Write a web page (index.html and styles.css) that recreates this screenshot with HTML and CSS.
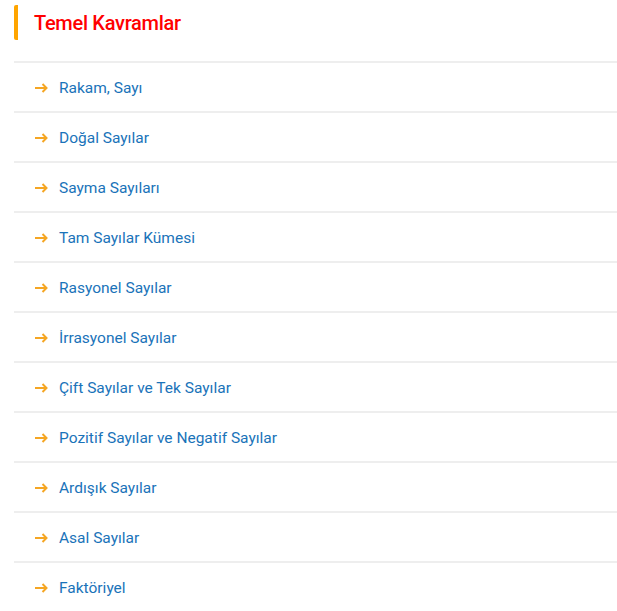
FILE: index.html
```html
<!DOCTYPE html>
<html lang="tr">
<head>
<meta charset="utf-8">
<link rel="stylesheet" href="styles.css">
</head>
<body>
<div class="wrap">
  <h2 class="title">Temel Kavramlar</h2>
  <ul class="list">
    <li class="item"><svg class="arrow" viewBox="0 0 13 10"><path d="M0 5H11.5M7.5 1L11.5 5L7.5 9"/></svg><a href="#">Rakam, Sayı</a></li>
    <li class="item"><svg class="arrow" viewBox="0 0 13 10"><path d="M0 5H11.5M7.5 1L11.5 5L7.5 9"/></svg><a href="#">Doğal Sayılar</a></li>
    <li class="item"><svg class="arrow" viewBox="0 0 13 10"><path d="M0 5H11.5M7.5 1L11.5 5L7.5 9"/></svg><a href="#">Sayma Sayıları</a></li>
    <li class="item"><svg class="arrow" viewBox="0 0 13 10"><path d="M0 5H11.5M7.5 1L11.5 5L7.5 9"/></svg><a href="#">Tam Sayılar Kümesi</a></li>
    <li class="item"><svg class="arrow" viewBox="0 0 13 10"><path d="M0 5H11.5M7.5 1L11.5 5L7.5 9"/></svg><a href="#">Rasyonel Sayılar</a></li>
    <li class="item"><svg class="arrow" viewBox="0 0 13 10"><path d="M0 5H11.5M7.5 1L11.5 5L7.5 9"/></svg><a href="#">İrrasyonel Sayılar</a></li>
    <li class="item"><svg class="arrow" viewBox="0 0 13 10"><path d="M0 5H11.5M7.5 1L11.5 5L7.5 9"/></svg><a href="#">Çift Sayılar ve Tek Sayılar</a></li>
    <li class="item"><svg class="arrow" viewBox="0 0 13 10"><path d="M0 5H11.5M7.5 1L11.5 5L7.5 9"/></svg><a href="#">Pozitif Sayılar ve Negatif Sayılar</a></li>
    <li class="item"><svg class="arrow" viewBox="0 0 13 10"><path d="M0 5H11.5M7.5 1L11.5 5L7.5 9"/></svg><a href="#">Ardışık Sayılar</a></li>
    <li class="item"><svg class="arrow" viewBox="0 0 13 10"><path d="M0 5H11.5M7.5 1L11.5 5L7.5 9"/></svg><a href="#">Asal Sayılar</a></li>
    <li class="item"><svg class="arrow" viewBox="0 0 13 10"><path d="M0 5H11.5M7.5 1L11.5 5L7.5 9"/></svg><a href="#">Faktöriyel</a></li>
  </ul>
</div>
</body>
</html>
```
FILE: styles.css
```css
html, body {
  margin: 0;
  padding: 0;
  background: #fff;
}
body {
  font-family: Roboto, "Noto Sans", sans-serif;
}
.wrap {
  padding: 5px 0 0 14px;
}
.title {
  margin: 0;
  box-sizing: border-box;
  height: 35px;
  padding-top: 1px;
  display: flex;
  align-items: center;
  border-left: 4px solid #ffa500;
  border-radius: 2px;
  padding-left: 16px;
  color: #ff0000;
  font-size: 20px;
  font-weight: 500;
  letter-spacing: -0.3px;
}
.list {
  list-style: none;
  margin: 21px 0 0 0;
  padding: 0;
}
.item {
  box-sizing: border-box;
  border-top: 2px solid #eeeeee;
  height: 50px;
  padding-top: 1px;
  display: flex;
  align-items: center;
  padding-left: 21px;
  gap: 11px;
  font-size: 15.5px;
}
.arrow {
  width: 13px;
  height: 10px;
  flex: none;
  fill: none;
  stroke: #f5a623;
  stroke-width: 2;
}
.item a {
  color: #1a73b9;
  text-decoration: none;
}
```
